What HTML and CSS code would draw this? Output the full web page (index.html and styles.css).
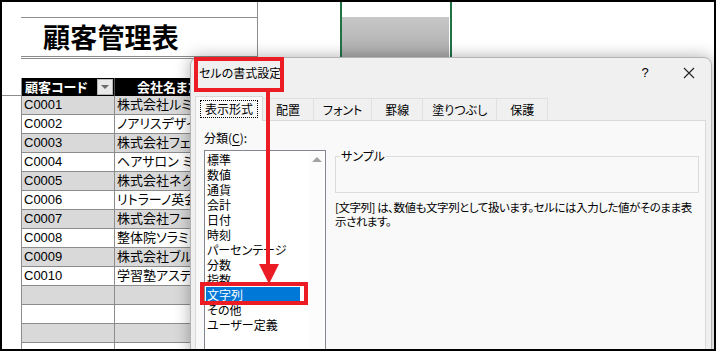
FILE: index.html
```html
<!DOCTYPE html>
<html lang="ja">
<head>
<meta charset="utf-8">
<title>顧客管理表 - セルの書式設定</title>
<link rel="stylesheet" href="styles.css">
</head>
<body>
<div class="screen">
  <div class="top">
    <div class="gutter-top"></div>
    <div class="title-cell"><h1 class="title">顧客管理表</h1></div>
    <div class="col-b"></div>
    <div class="sel"><div class="sel-fill"></div></div>
  </div>
  <div class="sheet">
    <div class="gutter"><div class="gutter-line"></div></div>
    <div class="tbl">
      <div class="hrow">
        <div class="hcell hcell-code">顧客コード<span class="filter"><span class="filter-tri"></span></span></div>
        <div class="hcell hcell-name">会社名または店舗名</div>
      </div>
      <div class="row row-g"><div class="cell c1">C0001</div><div class="cell">株式会社ルミナス</div></div>
      <div class="row"><div class="cell c1">C0002</div><div class="cell">ノアリスデザイン事務所</div></div>
      <div class="row row-g"><div class="cell c1">C0003</div><div class="cell">株式会社フェリクス</div></div>
      <div class="row"><div class="cell c1">C0004</div><div class="cell">ヘアサロン ミレイ</div></div>
      <div class="row row-g"><div class="cell c1">C0005</div><div class="cell">株式会社ネクスト</div></div>
      <div class="row"><div class="cell c1">C0006</div><div class="cell">リトラーノ英会話</div></div>
      <div class="row row-g"><div class="cell c1">C0007</div><div class="cell">株式会社フーガ</div></div>
      <div class="row"><div class="cell c1">C0008</div><div class="cell">整体院ソラミク</div></div>
      <div class="row row-g"><div class="cell c1">C0009</div><div class="cell">株式会社ブルーム</div></div>
      <div class="row"><div class="cell c1">C0010</div><div class="cell">学習塾アステリア</div></div>
      <div class="row row-g"><div class="cell c1"></div><div class="cell"></div></div>
      <div class="row"><div class="cell c1"></div><div class="cell"></div></div>
      <div class="row row-g"><div class="cell c1"></div><div class="cell"></div></div>
      <div class="row"><div class="cell c1"></div><div class="cell"></div></div>
    </div>
  </div>

  <div class="dialog">
    <div class="titlebar">
      <span class="dlg-title">セルの書式設定</span>
      <span class="tb-btn">?</span>
      <span class="tb-btn tb-close">
        <svg width="12" height="12" viewBox="0 0 12 12"><path d="M1 1L11 11M11 1L1 11" stroke="#222" stroke-width="1.1" fill="none"/></svg>
      </span>
    </div>
    <div class="tabs">
      <div class="tab tab-sel"><span class="focus">表示形式</span></div>
      <div class="tab">配置</div>
      <div class="tab">フォント</div>
      <div class="tab">罫線</div>
      <div class="tab tab-wide">塗りつぶし</div>
      <div class="tab">保護</div>
    </div>
    <div class="panel">
      <div class="left">
        <div class="label">分類(<u>C</u>):</div>
        <div class="listbox">
          <div class="item">標準</div>
          <div class="item">数値</div>
          <div class="item">通貨</div>
          <div class="item">会計</div>
          <div class="item">日付</div>
          <div class="item">時刻</div>
          <div class="item">パーセンテージ</div>
          <div class="item">分数</div>
          <div class="item">指数</div>
          <div class="item item-sel">文字列</div>
          <div class="item">その他</div>
          <div class="item">ユーザー定義</div>
          <div class="scroll"><span class="scroll-up"></span></div>
        </div>
      </div>
      <div class="right">
        <fieldset class="sample">
          <legend class="sample-legend">サンプル</legend>
          <div class="sample-body"></div>
        </fieldset>
        <p class="desc"><span class="line">[文字列] は、数値も文字列として扱います。セルには入力した値がそのまま表</span><span class="line">示されます。</span></p>
      </div>
    </div>
  </div>

  <div class="mark mark-title"></div>
  <div class="mark mark-item"></div>
  <svg class="arrow" width="26" height="196" viewBox="0 0 26 196">
    <rect x="8" y="0" width="4" height="176" fill="#ec1c24"/>
    <polygon points="1,174 21,174 11,194" fill="#ec1c24"/>
  </svg>
</div>
</body>
</html>
```

FILE: styles.css
```css
* { box-sizing: border-box; }
html, body { margin: 0; padding: 0; background: #fff; }

.screen {
  width: 716px;
  height: 351px;
  border: 2px solid #000;
  position: relative;
  overflow: hidden;
  background: #fff;
  font-family: "Liberation Sans", "Noto Sans CJK JP", sans-serif;
  font-feature-settings: "palt";
}

/* ---------- sheet top ---------- */
.top { display: flex; height: 56px; }
.gutter-top { width: 19px; flex: none; }
.title-cell {
  width: 236px;
  flex: none;
  margin-top: 15px;
  height: 42px;
  border-top: 1px solid #8c8c8c;
  border-bottom: 3px double #8c8c8c;
}
.title {
  margin: 0;
  padding-left: 22px;
  font-family: "Noto Sans CJK JP", sans-serif;
  font-size: 27px;
  font-weight: 700;
  line-height: 38px;
  color: #000;
  letter-spacing: 0.2px;
}
.col-b { width: 83px; flex: none; height: 55px; border-left: 1px solid #8c8c8c; }
.sel {
  width: 112px;
  flex: none;
  height: 55px;
  border-left: 2px solid #217346;
  border-right: 2px solid #217346;
  padding: 15px 1px 0 0;
}
.sel-fill { height: 40px; background: linear-gradient(#c7c7c7, #acacac); }

/* ---------- table ---------- */
.sheet { display: flex; margin-top: 20px; }
.gutter { width: 19px; flex: none; }
.gutter-line { height: 18px; border-bottom: 1px solid #8c8c8c; }
.tbl { width: 230px; flex: none; border-left: 1px solid #8c8c8c; }
.hrow { display: grid; grid-template-columns: 93px 1fr; height: 18px; background: #000; }
.hcell {
  color: #fff;
  font-family: "Noto Sans CJK JP", sans-serif;
  font-weight: 700;
  font-size: 13px;
  line-height: 18px;
  white-space: nowrap;
  overflow: hidden;
}
.hcell-code { display: flex; align-items: center; padding-left: 3px; border-right: 1px solid #555; }
.hcell-name { padding-left: 22px; }
.filter {
  margin-left: auto;
  margin-right: 1px;
  width: 16px;
  height: 16px;
  background: #e9e9e9;
  border: 1px solid #b5b5b5;
  display: flex;
  align-items: center;
  justify-content: center;
}
.filter-tri {
  width: 0; height: 0;
  border-left: 4px solid transparent;
  border-right: 4px solid transparent;
  border-top: 4px solid #6b6b6b;
}
.row {
  display: grid;
  grid-template-columns: 93px 1fr;
  height: 19px;
  border-bottom: 1px solid #8c8c8c;
  background: #fff;
}
.row-g { background: #d9d9d9; }
.cell {
  font-size: 13px;
  line-height: 18px;
  color: #000;
  padding-left: 2px;
  white-space: nowrap;
  overflow: hidden;
}
.c1 { border-right: 1px solid #8c8c8c; padding-left: 2px; }

/* ---------- dialog ---------- */
.dialog {
  position: absolute;
  left: 188px;
  top: 55px;
  width: 522px;
  height: 300px;
  background: #f0f0f0;
  border: 1px solid #b4b4b4;
  border-radius: 8px 8px 0 0;
  box-shadow: 0 0 16px rgba(0, 0, 0, 0.32);
  font-family: "Noto Sans CJK JP", sans-serif;
  font-size: 12px;
  color: #000;
  display: flex;
  flex-direction: column;
}
.titlebar { display: flex; align-items: center; height: 30px; padding-left: 8px; flex: none; }
.dlg-title { flex: 1; line-height: 16px; }
.tb-btn { width: 44px; text-align: center; font-family: "Liberation Sans", sans-serif; font-size: 13px; line-height: 16px; display: flex; justify-content: center; align-items: center; }

.tabs { display: flex; align-items: flex-end; margin-top: 8px; padding-left: 4px; height: 24px; flex: none; }
.tab {
  height: 22px;
  min-width: 52px;
  padding: 0 9px;
  border: 1px solid #e0e0e0;
  border-bottom: none;
  margin-left: -1px;
  background: #f0f0f0;
  text-align: center;
  line-height: 21px;
  white-space: nowrap;
}
.tab-wide { min-width: 66px; }
.tab-sel {
  height: 25px;
  width: 68px;
  margin-left: 0;
  margin-bottom: -1px;
  background: #f9f9f9;
  border-color: #d9d9d9;
  position: relative;
  z-index: 1;
  padding: 3px 0 0 4px;
  line-height: 16px;
  text-align: left;
}
.focus { display: inline-block; border: 1px dotted #000; padding: 0 4px; line-height: 16px; }

.panel {
  flex: 1;
  margin: 0 5px 0 4px;
  background: #f9f9f9;
  border: 1px solid #d9d9d9;
  display: flex;
  padding-left: 8px;
}
.left { width: 122px; flex: none; padding-top: 9px; }
.label { line-height: 16px; }
.label u { text-underline-offset: 2px; }
.listbox {
  margin-top: 4px;
  height: 220px;
  background: #fff;
  border: 1px solid #828790;
  position: relative;
  padding-top: 1px;
}
.item { height: 15px; line-height: 15px; margin-left: 1px; width: 94px; padding-left: 1px; white-space: nowrap; }
.item-sel { background: #0078d7; color: #fff; }
.scroll { position: absolute; top: 0; right: 0; bottom: 0; width: 16px; background: #fcfcfc; display: flex; justify-content: center; padding-top: 6px; }
.scroll-up {
  width: 0; height: 0;
  border-left: 5px solid transparent;
  border-right: 5px solid transparent;
  border-bottom: 5px solid #a3a3a3;
}

.right { width: 364px; flex: none; margin-left: 9px; }
.sample { margin: 27px 0 0; padding: 0; border: 1px solid #dcdcdc; }
.sample-legend { padding: 0 1px; margin-left: 4px; line-height: 16px; }
.sample-body { height: 28px; }
.desc { margin: 7px 0 0; font-size: 11.5px; line-height: 14px; letter-spacing: -0.45px; }
.line { display: block; white-space: nowrap; }

/* ---------- annotations ---------- */
.mark { position: absolute; border: 4px solid #ec1c24; }
.mark-title { left: 192px; top: 55px; width: 90px; height: 35px; }
.mark-item { left: 198px; top: 280px; width: 108px; height: 23px; }
.arrow { position: absolute; left: 256px; top: 88px; }
```
